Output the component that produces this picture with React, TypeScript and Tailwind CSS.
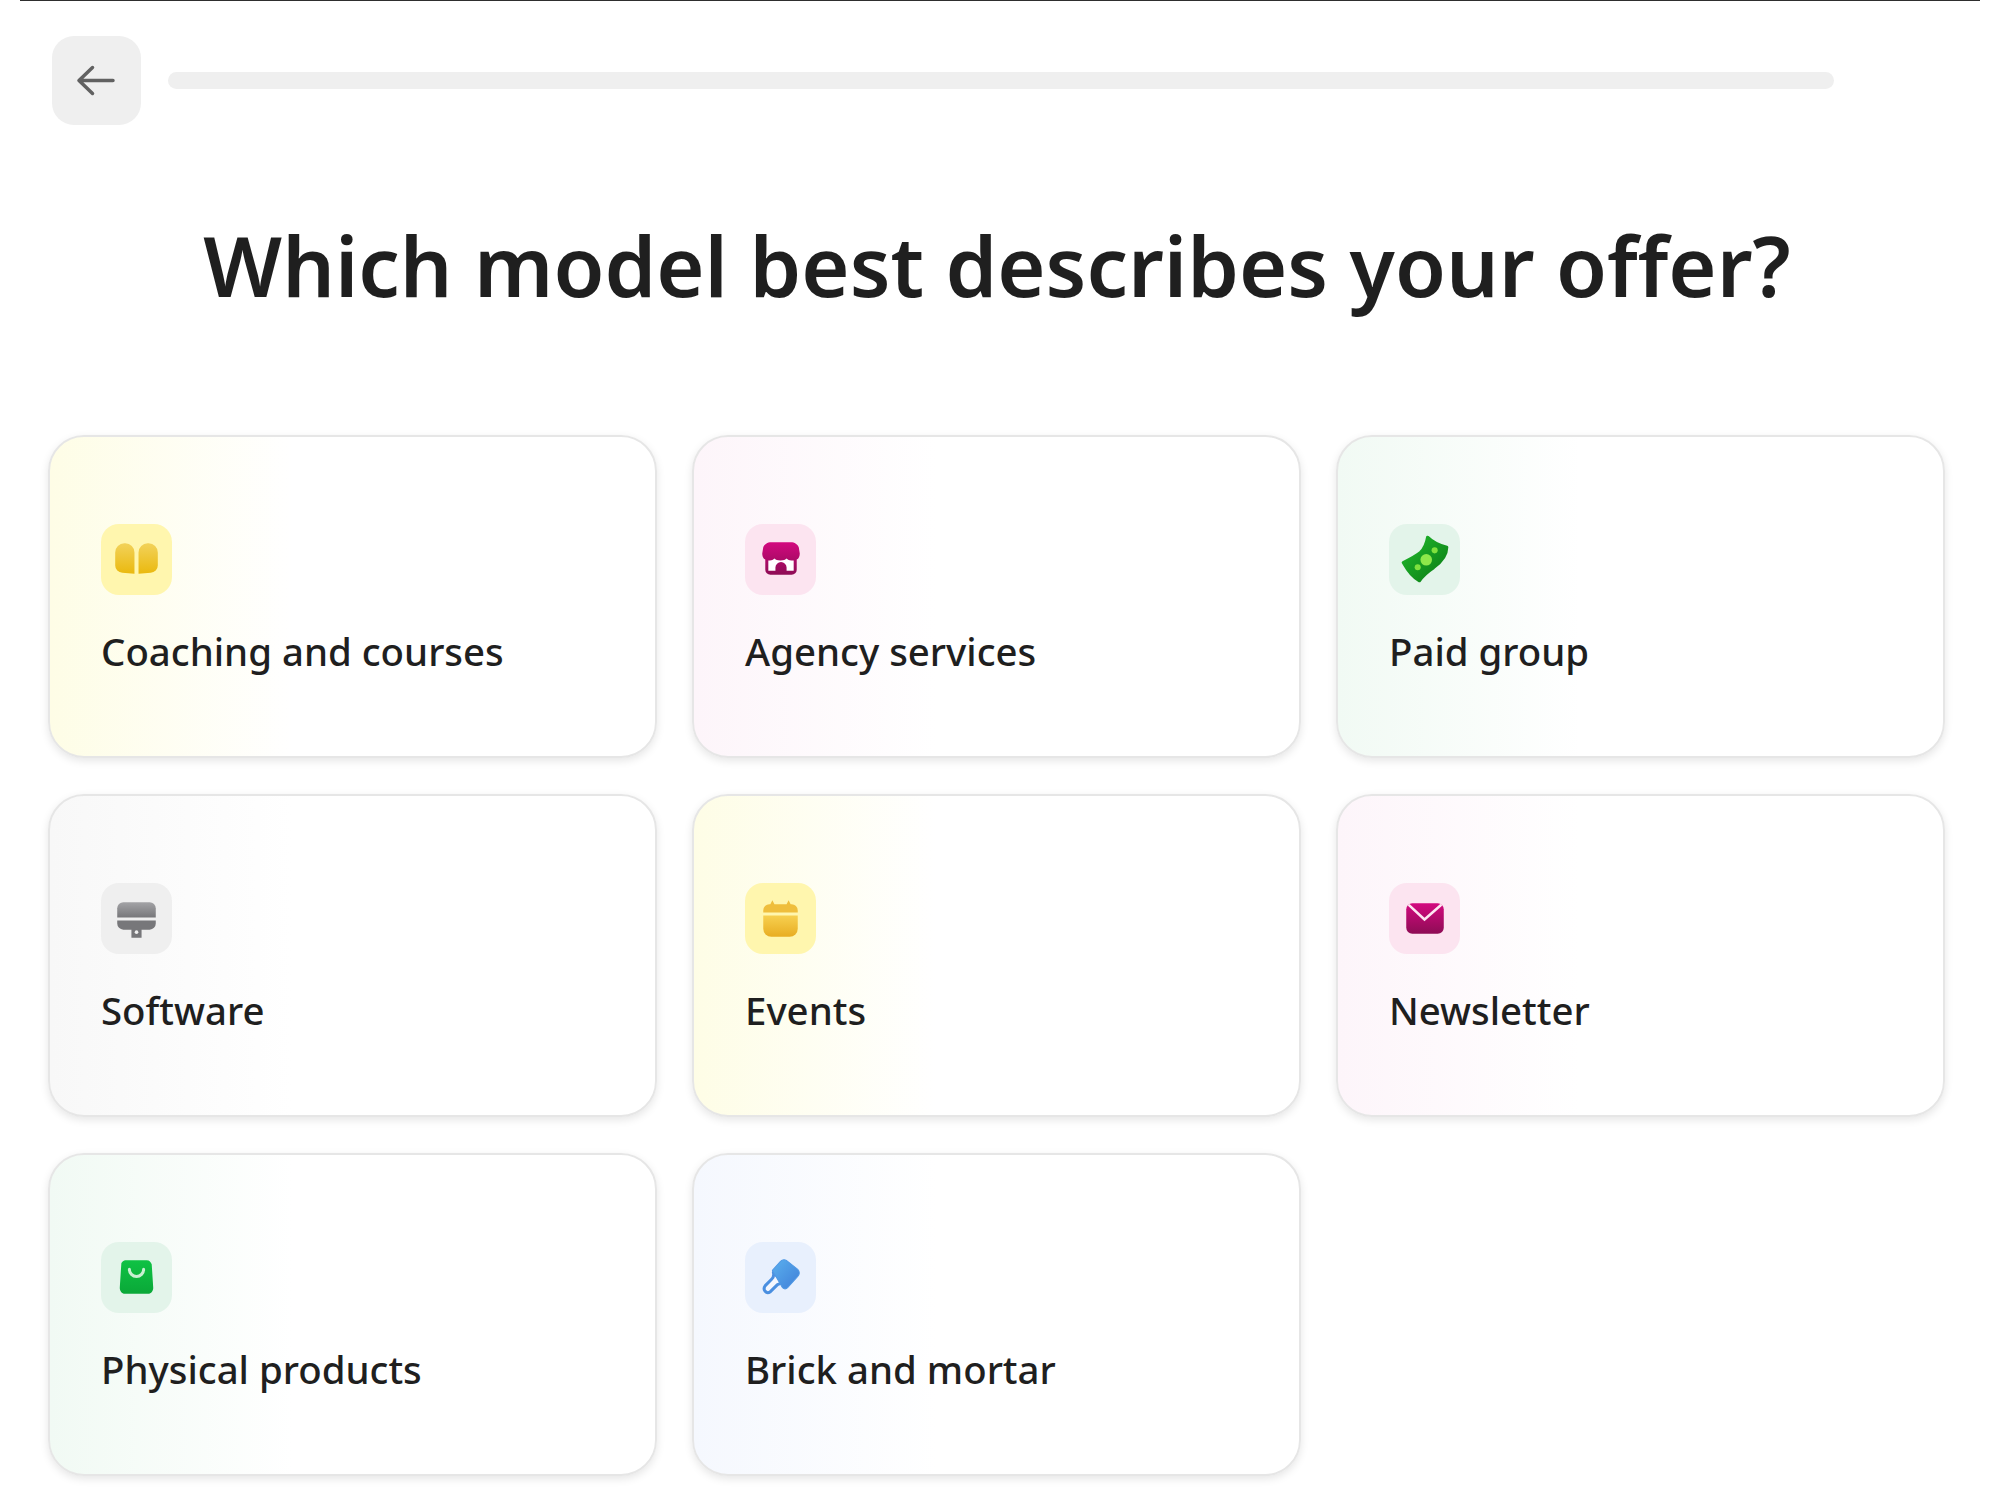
import type { ReactNode } from "react";

// each icon sits in a 70x70 tile
const BackArrow = () => (
    <svg viewBox="0 0 89 89" className="h-[89px] w-[89px]" fill="none" stroke="#616161" strokeWidth="3.5" strokeLinecap="round" strokeLinejoin="round">
        <path d="M27 44.500h34M40.500 31.500 27 44.500l13.500 13" />
    </svg>
);

const BookIcon = () => (
    <svg viewBox="0 0 70 70" className="h-full w-full">
        <defs>
            <linearGradient id="book" x1="0" y1="0" x2="0" y2="1">
                <stop offset="0" stopColor="#f2d25a" />
                <stop offset="1" stopColor="#eab90f" />
            </linearGradient>
        </defs>
        <path d="M14 28a9 9 0 0 1 9-9h1a9 9 0 0 1 9 9v21l-12-1a7 7 0 0 1-7-7z" fill="url(#book)" />
        <path d="M37 28a9 9 0 0 1 9-9h1a9 9 0 0 1 9 9v13a7 7 0 0 1-7 7l-12 1z" fill="url(#book)" />
    </svg>
);

const StoreIcon = () => (
    <svg viewBox="0 0 70 70" className="h-full w-full">
        <defs>
            <linearGradient id="store" x1="0" y1="0" x2="0" y2="1">
                <stop offset="0" stopColor="#d3097f" />
                <stop offset="1" stopColor="#8e0c55" />
            </linearGradient>
        </defs>
        <path d="M26 18h19c4 0 7 2 8 5l1 6c0 3-1 5-3 6v10a5 5 0 0 1-5 5H25a5 5 0 0 1-5-5V35c-2-1-3-3-3-6l1-6c1-3 4-5 8-5z" fill="url(#store)" />
        <path d="M23 36c2 0 4 0 6-2 1 1 3 2 6 2s5-1 6-2c2 2 4 2 7 2v10h-7v-3a5.500 5.500 0 0 0-11 0v3h-7z" fill="#fff" />
    </svg>
);

const MoneyIcon = () => (
    <svg viewBox="0 0 70 70" className="h-full w-full">
        <defs>
            <linearGradient id="money" x1="0" y1="0" x2="1" y2="1">
                <stop offset="0" stopColor="#22bb2e" />
                <stop offset="1" stopColor="#0a7a14" />
            </linearGradient>
        </defs>
        <path d="M38 13c5 5 11 8 19 10 0 9-6 15-13 20-6 4-10 7-14 13-6-3-11-9-16-18 6-3 12-6 17-10 4-4 6-9 7-15z" fill="url(#money)" stroke="url(#money)" strokeWidth="3" strokeLinejoin="round" />
        <circle cx="36.700" cy="35.300" r="5.700" fill="#8ee84a" />
        <circle cx="45" cy="26" r="3" fill="#7fe03e" />
        <circle cx="28.300" cy="42.700" r="3" fill="#7fe03e" />
    </svg>
);

const SoftwareIcon = () => (
    <svg viewBox="0 0 70 70" className="h-full w-full">
        <defs>
            <linearGradient id="software" x1="0" y1="0" x2="0" y2="1">
                <stop offset="0" stopColor="#a3a3a6" />
                <stop offset="1" stopColor="#77777a" />
            </linearGradient>
        </defs>
        <path d="M16 34v-9a6 6 0 0 1 6-6h26a6 6 0 0 1 6 6v9z" fill="url(#software)" />
        <path d="M16 37h38v3a6 6 0 0 1-6 6h-8v8H30v-8h-8a6 6 0 0 1-6-6z" fill="#77777a" />
        <circle cx="35" cy="48.500" r="1.800" fill="#efefef" />
    </svg>
);

const CalendarIcon = () => (
    <svg viewBox="0 0 70 70" className="h-full w-full">
        <defs>
            <linearGradient id="calendar" x1="0" y1="0" x2="0" y2="1">
                <stop offset="0" stopColor="#f7d050" />
                <stop offset="1" stopColor="#e8ad22" />
            </linearGradient>
        </defs>
        <path d="M18 29v-2a6 6 0 0 1 6-6h1l2-4 2 4h12l2-4 2 4h1a6 6 0 0 1 6 6v2z" fill="#efbe3c" />
        <path d="M18 32h34v13a8 8 0 0 1-8 8H26a8 8 0 0 1-8-8z" fill="url(#calendar)" />
    </svg>
);

const MailIcon = () => (
    <svg viewBox="0 0 70 70" className="h-full w-full">
        <defs>
            <linearGradient id="mail" x1="0" y1="0" x2="0" y2="1">
                <stop offset="0" stopColor="#d3097f" />
                <stop offset="1" stopColor="#8e0c55" />
            </linearGradient>
        </defs>
        <rect x="17" y="20" width="37" height="30" rx="6" fill="url(#mail)" />
        <path d="M20 22l15 14 16-14" fill="none" stroke="#fde6f1" strokeWidth="2.500" strokeLinecap="round" />
    </svg>
);

const BagIcon = () => (
    <svg viewBox="0 0 70 70" className="h-full w-full">
        <defs>
            <linearGradient id="bag" x1="0" y1="0" x2="0" y2="1">
                <stop offset="0" stopColor="#0fc244" />
                <stop offset="1" stopColor="#0aa838" />
            </linearGradient>
        </defs>
        <path d="M25 18h20c3 0 4 2 5 4l1.500 23c0 3-2 6-5 6h-23c-3 0-5-3-5-6L20 22c0-2 2-4 5-4z" fill="url(#bag)" />
        <path d="M28 27a7 7 0 0 0 14 0" fill="none" stroke="#c8f0d2" strokeWidth="3" strokeLinecap="round" />
    </svg>
);

const BrushIcon = () => (
    <svg viewBox="0 0 70 70" className="h-full w-full">
        <defs>
            <linearGradient id="brush" x1="0" y1="0" x2="1" y2="1">
                <stop offset="0" stopColor="#5ab0ee" />
                <stop offset="1" stopColor="#3f7fd8" />
            </linearGradient>
        </defs>
        <path d="M28 30c1 3 0 5-2 7l-6 6c-3 4 1 9 5 6l7-7c2-1 4-2 7-1z" fill="#f4f7fe" stroke="#4a8fe0" strokeWidth="3" strokeLinejoin="round" />
        <path d="M27 28l8-9c2-2 5-2 7 0l10 8c2 2 2 5 0 7L42 45c-2 2-4 1-5 0z" fill="url(#brush)" stroke="#4f98e4" strokeWidth="1" strokeLinejoin="round" />
    </svg>
);

type Offer = {
    label: string;
    card: string;
    tile: string;
    icon: ReactNode;
};

const offers: Offer[] = [
    {
        label: "Coaching and courses",
        card: "from-[#fefde6]",
        tile: "bg-[#fff6ae]",
        icon: <BookIcon />,
    },
    {
        label: "Agency services",
        card: "from-[#fdf5fa]",
        tile: "bg-[#fce4f0]",
        icon: <StoreIcon />,
    },
    {
        label: "Paid group",
        card: "from-[#f1faf4]",
        tile: "bg-[#e3f4ea]",
        icon: <MoneyIcon />,
    },
    {
        label: "Software",
        card: "from-[#f8f8f8]",
        tile: "bg-[#efefef]",
        icon: <SoftwareIcon />,
    },
    {
        label: "Events",
        card: "from-[#fefde6]",
        tile: "bg-[#fff6ae]",
        icon: <CalendarIcon />,
    },
    {
        label: "Newsletter",
        card: "from-[#fdf5fa]",
        tile: "bg-[#fce4f0]",
        icon: <MailIcon />,
    },
    {
        label: "Physical products",
        card: "from-[#f1faf4]",
        tile: "bg-[#e3f4ea]",
        icon: <BagIcon />,
    },
    {
        label: "Brick and mortar",
        card: "from-[#f5f8fe]",
        tile: "bg-[#e8f0fd]",
        icon: <BrushIcon />,
    },
];

const App = () => {
    return (
        <div className="min-h-[1511px] bg-white font-['Noto_Sans',sans-serif] text-[#1f1f1f]">

            {/* TOP LINE */}
            <div className="mx-5 h-px bg-[#2e2e2e]" />

            {/* HEADER */}
            <div className="flex items-center gap-[27px] pl-[52px] pr-[166px] pt-[35px]">
                <button className="flex h-[89px] w-[89px] shrink-0 items-center justify-center rounded-[22px] bg-[#efefef]">
                    <BackArrow />
                </button>
                <div className="h-[17px] flex-1 rounded-full bg-[#efefef]" />
            </div>

            <h1 className="mt-[88px] pr-[6px] text-center text-[82.700px] leading-[104px] font-semibold">
                Which model best describes your offer?
            </h1>

            {/* CARDS */}
            <div className="mt-[118px] grid grid-cols-[repeat(3,609px)] gap-x-[35px] gap-y-[36px] pl-[48px]">
                {offers.map((offer) => (
                    <div
                        key={offer.label}
                        className={`flex h-[323px] flex-col rounded-[36px] border-2 border-[#e6e6e6] bg-linear-to-r ${offer.card} to-white to-40% pl-[51px] pt-[87px] shadow-[0_3px_8px_rgba(0,0,0,0.1)]`}
                    >
                        <div className={`h-[71px] w-[71px] rounded-[18px] ${offer.tile}`}>
                            {offer.icon}
                        </div>
                        <p className="mt-[29px] text-[38.400px] leading-[54px] font-medium">
                            {offer.label}
                        </p>
                    </div>
                ))}
            </div>

        </div>
    );
};

export default App;
